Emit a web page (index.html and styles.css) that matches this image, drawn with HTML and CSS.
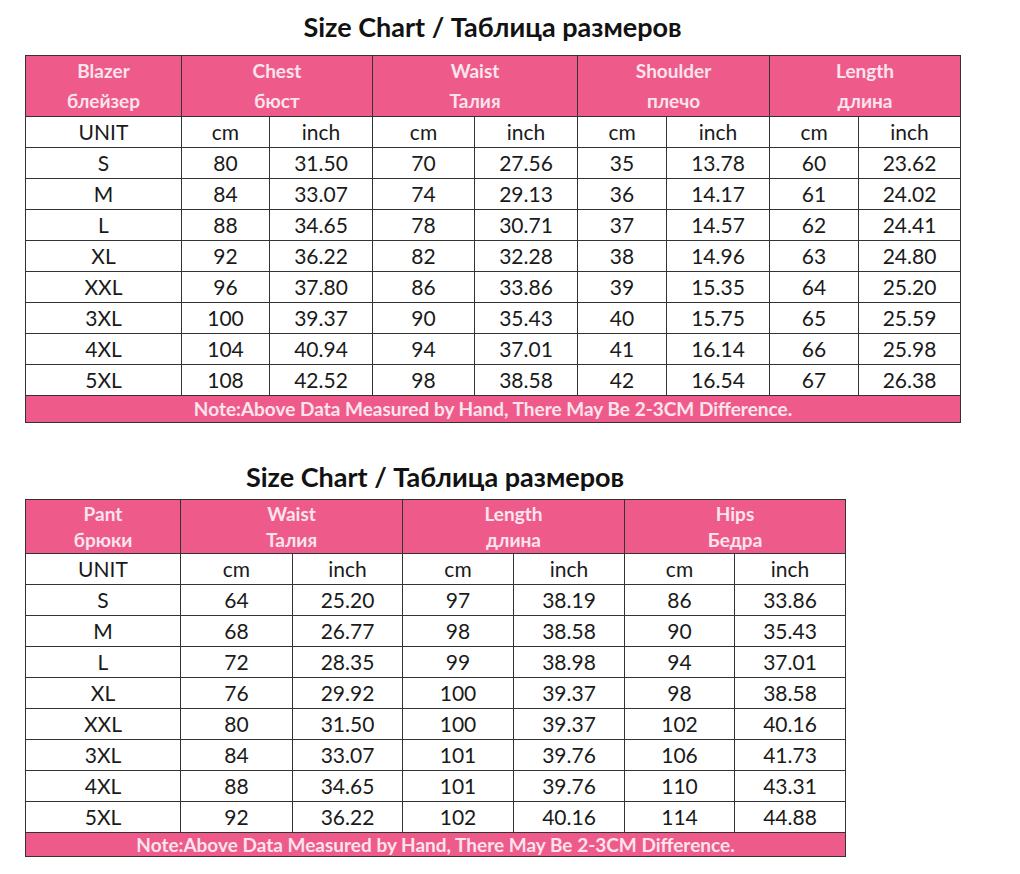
FILE: index.html
```html
<!DOCTYPE html>
<html lang="en">
<head>
<meta charset="utf-8">
<title>Size Chart</title>
<link rel="stylesheet" href="styles.css">
</head>
<body>
<div class="page">
  <section class="chart chart-blazer">
    <h2 class="title">Size Chart / Таблица размеров</h2>
    <table class="grid">
      <colgroup>
        <col class="w156"><col class="w88"><col class="w103"><col class="w102"><col class="w103"><col class="w89"><col class="w103"><col class="w89"><col class="w102">
      </colgroup>
      <thead>
        <tr class="head">
          <th>Blazer<br>блейзер</th>
          <th colspan="2">Chest<br>бюст</th>
          <th colspan="2">Waist<br>Талия</th>
          <th colspan="2">Shoulder<br>плечо</th>
          <th colspan="2">Length<br>длина</th>
        </tr>
      </thead>
      <tbody>
        <tr><td>UNIT</td><td>cm</td><td>inch</td><td>cm</td><td>inch</td><td>cm</td><td>inch</td><td>cm</td><td>inch</td></tr>
        <tr><td>S</td><td>80</td><td>31.50</td><td>70</td><td>27.56</td><td>35</td><td>13.78</td><td>60</td><td>23.62</td></tr>
        <tr><td>M</td><td>84</td><td>33.07</td><td>74</td><td>29.13</td><td>36</td><td>14.17</td><td>61</td><td>24.02</td></tr>
        <tr><td>L</td><td>88</td><td>34.65</td><td>78</td><td>30.71</td><td>37</td><td>14.57</td><td>62</td><td>24.41</td></tr>
        <tr><td>XL</td><td>92</td><td>36.22</td><td>82</td><td>32.28</td><td>38</td><td>14.96</td><td>63</td><td>24.80</td></tr>
        <tr><td>XXL</td><td>96</td><td>37.80</td><td>86</td><td>33.86</td><td>39</td><td>15.35</td><td>64</td><td>25.20</td></tr>
        <tr><td>3XL</td><td>100</td><td>39.37</td><td>90</td><td>35.43</td><td>40</td><td>15.75</td><td>65</td><td>25.59</td></tr>
        <tr><td>4XL</td><td>104</td><td>40.94</td><td>94</td><td>37.01</td><td>41</td><td>16.14</td><td>66</td><td>25.98</td></tr>
        <tr><td>5XL</td><td>108</td><td>42.52</td><td>98</td><td>38.58</td><td>42</td><td>16.54</td><td>67</td><td>26.38</td></tr>
        <tr class="note"><td colspan="9">Note:Above Data Measured by Hand, There May Be 2-3CM Difference.</td></tr>
      </tbody>
    </table>
  </section>

  <section class="chart chart-pant">
    <h2 class="title">Size Chart / Таблица размеров</h2>
    <table class="grid">
      <colgroup>
        <col class="w155"><col class="w112"><col class="w110"><col class="w111"><col class="w111"><col class="w110"><col class="w111">
      </colgroup>
      <thead>
        <tr class="head">
          <th>Pant<br>брюки</th>
          <th colspan="2">Waist<br>Талия</th>
          <th colspan="2">Length<br>длина</th>
          <th colspan="2">Hips<br>Бедра</th>
        </tr>
      </thead>
      <tbody>
        <tr><td>UNIT</td><td>cm</td><td>inch</td><td>cm</td><td>inch</td><td>cm</td><td>inch</td></tr>
        <tr><td>S</td><td>64</td><td>25.20</td><td>97</td><td>38.19</td><td>86</td><td>33.86</td></tr>
        <tr><td>M</td><td>68</td><td>26.77</td><td>98</td><td>38.58</td><td>90</td><td>35.43</td></tr>
        <tr><td>L</td><td>72</td><td>28.35</td><td>99</td><td>38.98</td><td>94</td><td>37.01</td></tr>
        <tr><td>XL</td><td>76</td><td>29.92</td><td>100</td><td>39.37</td><td>98</td><td>38.58</td></tr>
        <tr><td>XXL</td><td>80</td><td>31.50</td><td>100</td><td>39.37</td><td>102</td><td>40.16</td></tr>
        <tr><td>3XL</td><td>84</td><td>33.07</td><td>101</td><td>39.76</td><td>106</td><td>41.73</td></tr>
        <tr><td>4XL</td><td>88</td><td>34.65</td><td>101</td><td>39.76</td><td>110</td><td>43.31</td></tr>
        <tr><td>5XL</td><td>92</td><td>36.22</td><td>102</td><td>40.16</td><td>114</td><td>44.88</td></tr>
        <tr class="note"><td colspan="7">Note:Above Data Measured by Hand, There May Be 2-3CM Difference.</td></tr>
      </tbody>
    </table>
  </section>
</div>
</body>
</html>
```

FILE: styles.css
```css
html, body {
  margin: 0;
  padding: 0;
  background: #ffffff;
}

body {
  font-family: Lato, "Open Sans", "Liberation Sans", sans-serif;
  color: #1e1e1e;
}

.page {
  padding: 12px 0 0 25px;
}

.chart {
  display: flex;
  flex-direction: column;
  align-items: flex-start;
}

.chart-blazer { width: 935px; }
.chart-pant { width: 820px; margin-top: 39px; }

.title {
  align-self: stretch;
  margin: 0;
  text-align: center;
  font-size: 27px;
  line-height: 30px;
  font-weight: 700;
  color: #121212;
}

.chart-blazer .title { margin-bottom: 13px; }
.chart-pant .title { margin-bottom: 7px; }

.grid {
  border-collapse: collapse;
  table-layout: fixed;
  width: 100%;
}

.w88 { width: 88px; }
.w89 { width: 89px; }
.w102 { width: 102px; }
.w103 { width: 103px; }
.w110 { width: 110px; }
.w111 { width: 111px; }
.w112 { width: 112px; }
.w155 { width: 155px; }
.w156 { width: 156px; }

.grid th,
.grid td {
  border: 1px solid #333333;
  padding: 0;
  text-align: center;
  vertical-align: middle;
  overflow: hidden;
  white-space: nowrap;
}

.grid td {
  height: 30px;
  font-size: 21px;
  line-height: 30px;
  font-weight: 400;
  color: #1a1a1a;
}

.head th {
  background: #ee5b8b;
  color: #fce4ed;
  font-size: 19px;
  font-weight: 700;
  line-height: 30px;
  height: 59px;
}

.chart-pant .head th {
  line-height: 26px;
  height: 53px;
}

.note td {
  background: #ee5b8b;
  color: #fce4ed;
  font-size: 19px;
  font-weight: 700;
  height: 26px;
  line-height: 26px;
}

.chart-pant .note td {
  height: 23px;
  line-height: 23px;
}
```
